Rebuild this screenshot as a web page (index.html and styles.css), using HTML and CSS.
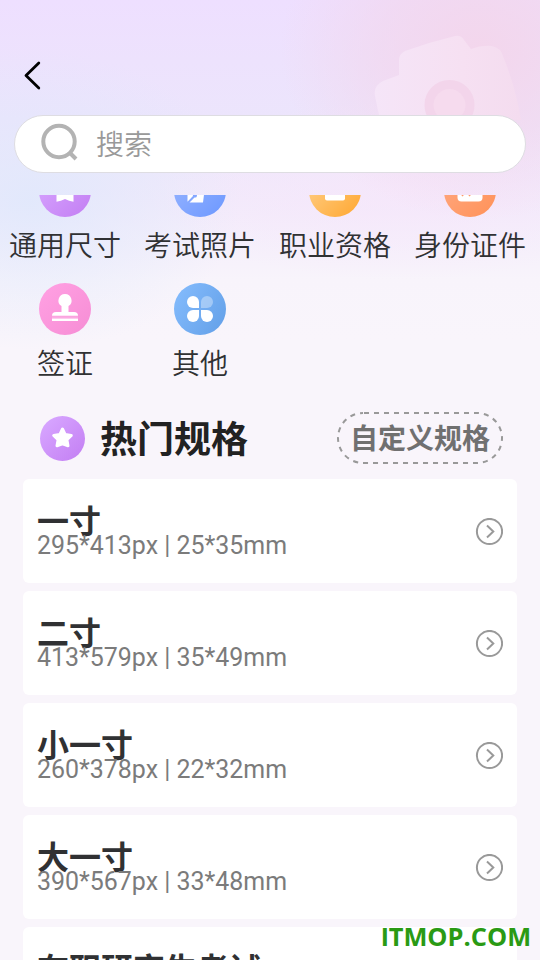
FILE: index.html
```html
<!DOCTYPE html>
<html lang="zh-CN">
<head>
<meta charset="utf-8">
<title>热门规格</title>
<link rel="stylesheet" href="styles.css">
</head>
<body>
<svg class="defs" width="0" height="0" aria-hidden="true">
  <defs>
    <linearGradient id="purple" x1="0" y1="0" x2="1" y2="1"><stop offset="0.1" stop-color="#d7a5ff"/><stop offset="0.9" stop-color="#c582f4"/></linearGradient>
    <linearGradient id="indigo" x1="0" y1="0" x2="1" y2="1"><stop offset="0.1" stop-color="#97b4ff"/><stop offset="0.9" stop-color="#719bff"/></linearGradient>
    <linearGradient id="amber" x1="0" y1="0" x2="1" y2="1"><stop offset="0.1" stop-color="#ffd08a"/><stop offset="0.9" stop-color="#ffab39"/></linearGradient>
    <linearGradient id="orange" x1="0" y1="0" x2="1" y2="1"><stop offset="0.1" stop-color="#ffa880"/><stop offset="0.9" stop-color="#ff945c"/></linearGradient>
    <linearGradient id="pink" x1="0" y1="0" x2="1" y2="1"><stop offset="0.1" stop-color="#ff9fe2"/><stop offset="0.9" stop-color="#f78fd6"/></linearGradient>
    <linearGradient id="blue" x1="0" y1="0.2" x2="1" y2="0.8"><stop offset="0.1" stop-color="#80b8fa"/><stop offset="0.9" stop-color="#68a4eb"/></linearGradient>
    <linearGradient id="camera" x1="0" y1="0" x2="1" y2="0"><stop offset="0" stop-color="#f5e5f8"/><stop offset="0.6" stop-color="#f6e0f2"/><stop offset="1" stop-color="#f4dcef"/></linearGradient>
    <symbol id="star" viewBox="0 0 24 24"><path d="M12 3 L14.7 8.600 L20.800 9.500 L16.400 13.800 L17.500 19.800 Q15 19 12 17.800 Q9 19 6.500 19.800 L7.600 13.800 L3.200 9.500 L9.300 8.600 Z" fill="#fff" stroke="#fff" stroke-width="3" stroke-linejoin="round"/></symbol>
    <symbol id="go" viewBox="0 0 28 28"><circle cx="14.500" cy="13.500" r="12.600" fill="none" stroke="#999" stroke-width="2"/><path d="M12 7.500 L18.300 13.500 L12 19.500" fill="none" stroke="#999" stroke-width="2"/></symbol>
  </defs>
</svg>
<div class="screen">
  <header class="header">
    <svg class="camera" width="166" height="90" viewBox="0 0 166 90">
      <path d="M6 90 L1 66 Q-1 56 9 51 L25 45 V30 Q25 24 31 21 Q56 12 81 6 Q87 5 90 10 L97 19 Q107 15 118 16 Q127 18 129 26 Q142 58 147 90 Z" fill="url(#camera)"/>
      <circle cx="75.500" cy="75" r="20.500" fill="#f6dbee" stroke="#f3d5eb" stroke-width="9"/>
    </svg>
    <svg class="back" width="24" height="32" viewBox="0 0 24 32"><path d="M17.800 4 L5 16.500 L17.800 29" fill="none" stroke="#000" stroke-width="2.800" stroke-linecap="round" stroke-linejoin="round"/></svg>
    <div class="search">
      <svg width="40" height="40" viewBox="0 0 40 40"><circle cx="19" cy="18.500" r="15.700" fill="none" stroke="#b3b3b3" stroke-width="4"/><path d="M29.500 29.500 L36 36" stroke="#b3b3b3" stroke-width="4"/></svg>
      <span class="placeholder">搜索</span>
    </div>
  </header>
  <main class="viewport">
    <nav class="categories">
      <div class="category">
        <svg width="52" height="52" viewBox="0 0 52 52"><circle cx="26" cy="26" r="26" fill="url(#purple)"/><path d="M17.500 18 H34.500 V36.700 Q30 36 26 34 Q22 36 17.500 36.700 Z" fill="#fff"/></svg>
        <span>通用尺寸</span>
      </div>
      <div class="category">
        <svg width="52" height="52" viewBox="0 0 52 52"><circle cx="26" cy="26" r="26" fill="url(#indigo)"/><path d="M13.500 22 H31 L29 37.500 H15.500 L20.500 32.500 A2 2 0 1 0 19 31 L13.500 36.800 Z" fill="#fff"/></svg>
        <span>考试照片</span>
      </div>
      <div class="category">
        <svg width="52" height="52" viewBox="0 0 52 52"><circle cx="26" cy="26" r="26" fill="url(#amber)"/><path d="M16 20 H36 V33.500 Q36 35.500 34 35.500 H18 Q16 35.500 16 33.500 Z" fill="#fff"/></svg>
        <span>职业资格</span>
      </div>
      <div class="category">
        <svg width="52" height="52" viewBox="0 0 52 52"><circle cx="26" cy="26" r="26" fill="url(#orange)"/><rect x="13.500" y="16" width="25" height="20.500" rx="4" fill="#fff"/><path d="M18 31 L19.300 29.500 M25 31 L26.300 29.500" stroke="#ff9a68" stroke-width="1.500"/></svg>
        <span>身份证件</span>
      </div>
      <div class="category">
        <svg width="52" height="52" viewBox="0 0 52 52"><circle cx="26" cy="26" r="26" fill="url(#pink)"/><path d="M26 11 A6.500 6.500 0 0 1 29.500 23 V29 H35 Q39 29 39 32.700 H13 Q13 29 17 29 H22.500 V23 A6.500 6.500 0 0 1 26 11 Z M13 35.500 H39 V38 H13 Z" fill="#fff"/><path d="M13 34.100 H39" stroke="#fff" stroke-width="1" opacity="0.35"/></svg>
        <span>签证</span>
      </div>
      <div class="category">
        <svg width="52" height="52" viewBox="0 0 52 52"><circle cx="26" cy="26" r="26" fill="url(#blue)"/><g fill="#fff"><path d="M19 13 A6 6 0 0 1 25 19 V25 H19 A6 6 0 0 1 19 13 Z"/><path d="M33 13 A6 6 0 0 1 33 25 H27 V19 A6 6 0 0 1 33 13 Z" opacity="0.350"/><path d="M19 27 H25 V33 A6 6 0 1 1 19 27 Z"/><path d="M27 27 H33 A6 6 0 1 1 27 33 Z"/></g></svg>
        <span>其他</span>
      </div>
    </nav>
    <section class="heading">
      <svg width="45" height="45" viewBox="0 0 45 45"><circle cx="22.500" cy="22.500" r="22.500" fill="url(#purple)"/><use href="#star" x="10.500" y="10" width="24" height="24"/></svg>
      <h1>热门规格</h1>
      <div class="custom">
        <svg class="outline" width="166" height="52" viewBox="0 0 166 52"><rect x="1" y="1" width="164" height="50" rx="25" fill="none" stroke="#999" stroke-width="2" stroke-dasharray="5 5" stroke-dashoffset="-1"/></svg>
        <span>自定义规格</span>
      </div>
    </section>
    <section class="list">
      <article class="card"><div><h2>一寸</h2><p>295*413px | 25*35mm</p></div><svg width="28" height="28"><use href="#go"/></svg></article>
      <article class="card"><div><h2>二寸</h2><p>413*579px | 35*49mm</p></div><svg width="28" height="28"><use href="#go"/></svg></article>
      <article class="card"><div><h2>小一寸</h2><p>260*378px | 22*32mm</p></div><svg width="28" height="28"><use href="#go"/></svg></article>
      <article class="card"><div><h2>大一寸</h2><p>390*567px | 33*48mm</p></div><svg width="28" height="28"><use href="#go"/></svg></article>
      <article class="card"><div><h2>在职研究生考试</h2></div></article>
    </section>
  </main>
  <div class="watermark"><span class="initial">I</span>TMOP.COM</div>
</div>
</body>
</html>
```
FILE: styles.css
```css
* { box-sizing: border-box; }

body {
  margin: 0;
  font-family: "Noto Sans CJK SC", sans-serif;
}

svg { display: block; flex: none; }

h1, h2, p { margin: 0; }

.defs { position: absolute; }

.screen {
  position: relative;
  display: flex;
  flex-direction: column;
  width: 540px;
  height: 960px;
  overflow: hidden;
  background:
    radial-gradient(ellipse 200px 170px at 480px 50px, #f3d6ec 0%, rgba(243, 214, 236, 0.6) 50%, rgba(243, 214, 236, 0) 100%),
    radial-gradient(ellipse 210px 150px at 30px 200px, rgba(222, 232, 252, 0.8) 0%, rgba(222, 232, 252, 0) 100%),
    radial-gradient(ellipse 250px 90px at 400px 190px, rgba(247, 230, 250, 0.7) 0%, rgba(247, 230, 250, 0) 100%),
    linear-gradient(180deg, #eedfff 0%, #ede2fd 60px, #ece5fc 120px, #f2eafb 200px, #f8f4fb 280px, #f9f5fb 340px);
}

.header {
  position: relative;
  flex: none;
  height: 195px;
  padding: 59px 14px 0;
}

.camera { position: absolute; left: 374px; top: 30px; }

.back { margin-left: 7px; }

.search {
  position: relative;
  display: flex;
  align-items: center;
  gap: 16px;
  height: 58px;
  margin-top: 24px;
  padding: 0 0 2px 25px;
  border: 1px solid #dedde2;
  border-radius: 29px;
  background: #fff;
}

.placeholder {
  font-size: 28px;
  font-weight: 350;
  line-height: 40px;
  color: #999;
}

.viewport {
  flex: 1;
  min-height: 0;
  overflow: hidden;
}

.categories {
  display: grid;
  grid-template-columns: repeat(4, 135px);
  grid-auto-rows: 118px;
  width: 540px;
  margin-top: -30px;
}

.category {
  display: flex;
  flex-direction: column;
  align-items: center;
  gap: 7px;
  padding-right: 5px;
  font-size: 28px;
  font-weight: 350;
  line-height: 40px;
  white-space: nowrap;
  color: #303133;
}

.heading {
  display: flex;
  align-items: center;
  height: 52px;
  margin-top: 11px;
  padding: 0 37px 0 40px;
}

.heading h1 {
  margin-left: 15px;
  font-size: 37px;
  font-weight: 700;
  line-height: 50px;
  padding-bottom: 2px;
  color: #222;
}

.custom {
  position: relative;
  width: 166px;
  height: 52px;
  margin-left: auto;
  font-size: 28px;
  font-weight: 700;
  line-height: 50px;
  text-align: center;
  color: #707070;
}

.outline { position: absolute; inset: 0; }

.list {
  display: flex;
  flex-direction: column;
  gap: 8px;
  padding: 15px 23px 0;
}

.card {
  display: flex;
  align-items: center;
  justify-content: space-between;
  flex: none;
  height: 104px;
  padding: 2px 14px 0 14px;
  border-radius: 6px;
  background: #fff;
}

.card > div {
  align-self: flex-start;
  padding-top: 24px;
}

.card h2 {
  font-size: 32px;
  font-weight: 700;
  line-height: 29px;
  color: #303133;
}

.card p {
  font-family: Roboto, sans-serif;
  font-size: 24.95px;
  line-height: 23px;
  color: #7b7b7b;
}

.watermark {
  position: absolute;
  left: 381px;
  top: 919px;
  font-family: "Open Sans", sans-serif;
  font-size: 25.4px;
  font-weight: 700;
  line-height: 34px;
  white-space: nowrap;
  color: #2a9a14;
}

.initial {
  font-family: Lato, sans-serif;
  font-weight: 900;
}
```
